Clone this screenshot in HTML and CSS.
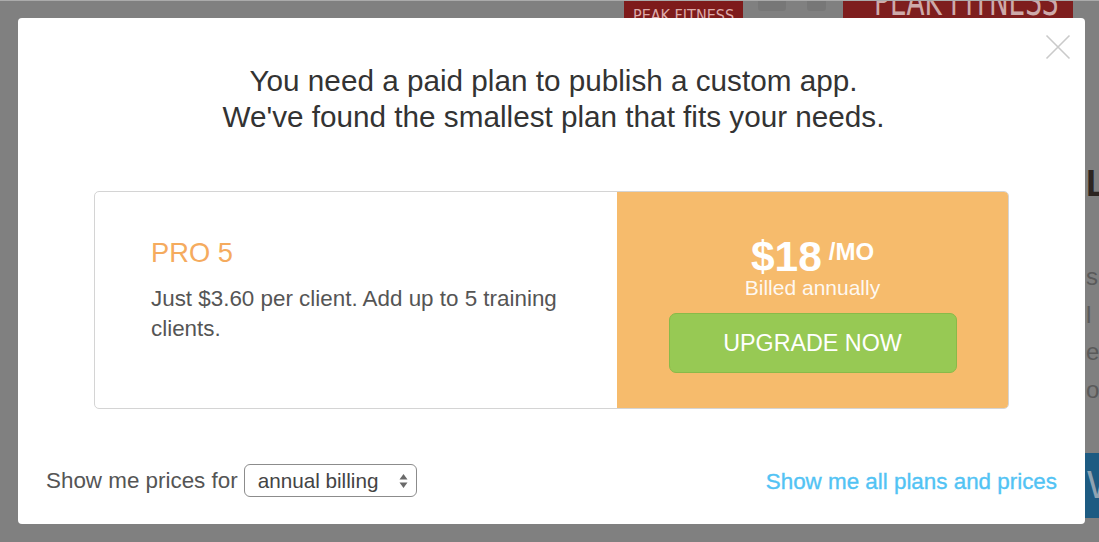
FILE: index.html
```html
<!DOCTYPE html>
<html lang="en">
<head>
<meta charset="utf-8">
<title>Upgrade plan</title>
<link rel="stylesheet" href="styles.css">
</head>
<body>
<div class="backdrop">
  <div class="bg-top">
    <div class="brand-small"><span>PEAK FITNESS</span></div>
    <div class="sq sq1"></div>
    <div class="sq sq2"></div>
    <div class="brand-big"><span>PEAK FITNESS</span></div>
  </div>
  <div class="bg-side">
    <div class="side-title">LE</div>
    <div class="side-text">s<br>l<br>e<br>or</div>
    <div class="side-btn">W</div>
  </div>
</div>

<div class="modal">
  <button class="close" aria-label="Close">
    <svg width="26" height="26" viewBox="0 0 26 26"><path d="M1.5 1.5 L24.5 24.5 M24.5 1.5 L1.5 24.5" stroke="#cacaca" stroke-width="1.6" fill="none"/></svg>
  </button>
  <h1 class="headline">You need a paid plan to publish a custom app.<br>We've found the smallest plan that fits your needs.</h1>
  <div class="plan">
    <div class="plan-info">
      <h2 class="plan-name">PRO 5</h2>
      <p class="plan-desc">Just $3.60 per client. Add up to 5 training clients.</p>
    </div>
    <div class="plan-buy">
      <div class="price"><span class="amount">$18</span><span class="per">/MO</span></div>
      <div class="billed">Billed annually</div>
      <button class="upgrade">UPGRADE NOW</button>
    </div>
  </div>
  <div class="footer">
    <div class="billing">
      <span class="billing-label">Show me prices for</span>
      <div class="select">
        <span>annual billing</span>
        <svg width="9" height="16" viewBox="0 0 9 16"><path d="M4.5 1 L8.5 6.5 L0.5 6.5 Z M4.5 15 L8.5 9.5 L0.5 9.5 Z" fill="#6a6a6a"/></svg>
      </div>
    </div>
    <a class="all-plans" href="#">Show me all plans and prices</a>
  </div>
</div>
</body>
</html>
```

FILE: styles.css
```css
* { box-sizing: border-box; }

html, body {
  margin: 0;
  padding: 0;
}

body {
  width: 1099px;
  height: 542px;
  overflow: hidden;
  position: relative;
  background: #808080;
  border-top: 1px solid #ababab;
  font-family: "Liberation Sans", Arial, sans-serif;
}

/* ---------- dimmed page behind the dialog ---------- */
.backdrop {
  display: flex;
  flex-direction: column;
}

.bg-top {
  display: flex;
  align-items: flex-start;
  padding-left: 624px;
  height: 40px;
}

.brand-small {
  width: 119px;
  height: 40px;
  background: #7e1b1b;
  color: #dcaaaa;
  font-family: "Liberation Sans Narrow", "DejaVu Sans Condensed", sans-serif;
  font-stretch: condensed;
  font-size: 16px;
  line-height: 18px;
  padding-top: 6px;
  text-align: center;
  white-space: nowrap;
  overflow: hidden;
}

.sq {
  height: 10px;
  background: #777777;
  border-radius: 0 0 3px 3px;
}
.sq1 { width: 28px; margin-left: 15px; }
.sq2 { width: 19px; margin-left: 21px; }

.brand-big {
  width: 230px;
  height: 40px;
  margin-left: 17px;
  background: #7e1e1e;
  color: #cdaaaa;
  font-family: "Liberation Sans Narrow", "DejaVu Sans Condensed", sans-serif;
  font-stretch: condensed;
  font-size: 40px;
  line-height: 40px;
  text-align: center;
  white-space: nowrap;
  overflow: hidden;
}
.brand-big span {
  display: block;
  margin-top: -20px;
  transform: scaleX(0.73);
}

.bg-side {
  display: flex;
  flex-direction: column;
  padding-left: 1086px;
}

.side-title {
  margin-top: 123px;
  font-size: 36px;
  line-height: 40px;
  font-weight: bold;
  color: #2c2420;
  white-space: nowrap;
}

.side-text {
  margin-top: 54px;
  font-size: 24px;
  line-height: 37.5px;
  color: #5a5a5a;
  white-space: nowrap;
}

.side-btn {
  margin-top: 45px;
  margin-left: -1px;
  height: 65px;
  background: #1d5b82;
  color: #8fa3b2;
  font-size: 38px;
  line-height: 65px;
  padding-left: 2px;
}

/* ---------- dialog ---------- */
.modal {
  position: absolute;
  left: 18px;
  top: 17px;
  width: 1067px;
  height: 506px;
  background: #ffffff;
  border-radius: 4px;
  display: flex;
  flex-direction: column;
  padding: 45px 28px 27px;
}

.close {
  position: absolute;
  top: 16px;
  right: 14px;
  width: 26px;
  height: 26px;
  padding: 0;
  border: 0;
  background: none;
  display: block;
}
.close svg { display: block; }

.headline {
  margin: 0;
  padding-left: 4px;
  font-size: 29.7px;
  line-height: 36px;
  font-weight: normal;
  color: #333333;
  text-align: center;
}

.plan {
  margin: 56px 48px 0;
  height: 218px;
  display: flex;
  border: 1px solid #d4d4d4;
  border-radius: 5px;
  overflow: hidden;
}

.plan-info {
  flex: 1;
  padding: 45px 40px 0 56px;
}

.plan-name {
  margin: 0;
  font-size: 27.3px;
  line-height: 32px;
  font-weight: normal;
  color: #f5ab5e;
}

.plan-desc {
  margin: 15px 0 0;
  font-size: 22.4px;
  line-height: 30px;
  color: #555555;
}

.plan-buy {
  width: 391px;
  background: #f6bb6c;
  display: flex;
  flex-direction: column;
  align-items: center;
  padding-top: 44px;
  color: #ffffff;
}

.price {
  font-size: 42.5px;
  line-height: 42px;
  height: 42px;
  white-space: nowrap;
}

.amount {
  font-weight: bold;
}

.per {
  display: inline-block;
  vertical-align: top;
  margin-left: 7px;
  padding-top: 4px;
  font-size: 24px;
  line-height: 24px;
  font-weight: bold;
}

.billed {
  font-size: 21px;
  line-height: 20px;
  color: rgba(255, 255, 255, 0.92);
}

.upgrade {
  margin-top: 15px;
  width: 288px;
  height: 60px;
  background: #97c954;
  border: 1px solid #89ba49;
  border-radius: 7px;
  color: #ffffff;
  font-family: "Liberation Sans", Arial, sans-serif;
  font-size: 23.3px;
  padding: 0;
}

.footer {
  margin-top: auto;
  height: 33px;
  display: flex;
  align-items: center;
  justify-content: space-between;
}

.billing {
  display: flex;
  align-items: center;
  gap: 6px;
}

.billing-label {
  font-size: 22.4px;
  color: #555555;
}

.select {
  width: 173px;
  height: 33px;
  border: 1px solid #8c8c8c;
  border-radius: 6px;
  display: flex;
  align-items: center;
  justify-content: space-between;
  padding: 0 8px 0 13px;
  font-size: 20.7px;
  color: #444444;
}
.select svg { display: block; }

.all-plans {
  font-size: 22.4px;
  color: #52c3f4;
  text-decoration: none;
  -webkit-text-stroke: 0.35px #52c3f4;
  padding-top: 3px;
}
```
